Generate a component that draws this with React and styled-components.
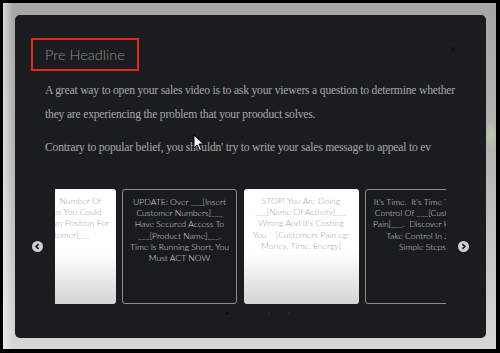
import React from 'react';
import styled, { createGlobalStyle } from 'styled-components';

const Global = createGlobalStyle`
  html, body { margin: 0; padding: 0; background: #000; }
  * { box-sizing: border-box; }
`

const Screen = styled.div`
  width: 500px;
  height: 353px;
  background: #000;
  padding: 3px 4px 4px 3px;
`

const Frame = styled.div`
  height: 100%;
  padding: 12px 10px 11px 12px;
  background:
    radial-gradient(ellipse 6px 14px at 99% 38%, rgba(200, 230, 150, 0.6), rgba(200, 230, 150, 0) 100%),
    linear-gradient(to right, rgba(255,255,255,0.55) 0, rgba(255,255,255,0) 10px),
    linear-gradient(to bottom, #a6a6a6 0%, #b4b4b4 40%, #d6d6d6 100%);
`

const Panel = styled.div`
  position: relative;
  height: 100%;
  background: #1b1c20;
  border-radius: 5px;
  padding: 23px 30px 0 30px;
`

const Close = styled.span`
  position: absolute;
  top: 28px;
  right: 30px;
  font: 11px "Liberation Sans", sans-serif;
  color: #0d0d0f;
`

const HeadlineBox = styled.div`
  display: inline-block;
  margin-left: -14px;
  padding: 0 12px;
  height: 33px;
  line-height: 30px;
  border: 2px solid #e12a1c;
  font-family: Lato, "Open Sans", sans-serif;
  font-weight: 300;
  font-size: 14.5px;
  color: #8c8c8c;
`

const Copy = styled.div`
  margin-top: 8px;
  font-family: "Liberation Serif", serif;
  font-size: 11.6px;
  letter-spacing: -0.19px;
  line-height: 24px;
  color: #a9a9ab;
  white-space: nowrap;
  p { margin: 0 0 9px; }
`

const Carousel = styled.div`
  display: flex;
  align-items: center;
  gap: 12px;
  margin: 29px -13px 0 -13px;
`

const Arrow = styled.div`
  flex: 0 0 11px;
  height: 11px;
  border-radius: 50%;
  background: #cfcfcf;
  display: flex;
  align-items: center;
  justify-content: center;
`

const Viewport = styled.div`
  width: 392px;
  height: 115px;
  overflow: hidden;
`

const Track = styled.div`
  display: flex;
  gap: 6.5px;
  margin-left: -54.5px;
`

const Card = styled.div`
  flex: 0 0 115px;
  height: 115px;
  border-radius: 3px;
  padding: 7px 2px 0;
  text-align: center;
  font-family: Lato, "Open Sans", sans-serif;
  font-weight: 300;
  font-size: 8.6px;
  line-height: 11.2px;
  white-space: pre;
  color: ${p => p.$light ? '#a5a5a5' : '#dedede'};
  background: ${p => p.$light ? 'linear-gradient(to bottom, #ffffff 55%, #d4d4d4 100%)' : '#1a1b1f'};
  border: ${p => p.$light ? 'none' : '1.5px solid #8d8d8f'};
`

const Dots = styled.div`
  display: flex;
  gap: 17.5px;
  margin-top: 8px;
  padding-left: 181px;
`

const Dot = styled.span`
  width: 3px;
  height: 3px;
  border-radius: 50%;
  background: ${p => p.$c};
`

const Pointer = styled.svg`
  position: absolute;
  left: 178px;
  top: 119px;
`

const Chevron = ({ dir }) => (
  <svg width="7" height="7" viewBox="0 0 10 10">
    <path d={dir === 'left' ? 'M6.5 1.5 L3 5 L6.5 8.5' : 'M3.5 1.5 L7 5 L3.5 8.5'} fill="none" stroke="#1b1c20" strokeWidth="2.4" />
  </svg>
)

const cards = [
  { light: true, lines: ['How Many  Number Of', 'Simple Steps You Could', 'Take Your Own Position For', '___[Customer]___'] },
  { light: false, lines: ['UPDATE: Over ___[Insert', 'Customer Numbers]___', 'Have Secured Access To', '___[Product Name]___.', 'Time Is Running Short, You', 'Must ACT NOW'] },
  { light: true, lines: ['STOP! You Are Doing', '___[Name Of Activity]___', "Wrong And It's Costing", 'You    [Customers Pain eg:', 'Money, Time, Energy]'] },
  { light: false, lines: ["It's Time.  It's Time To Take", 'Control Of ___[Customers', 'Pain]___.  Discover How To', 'Take Control In Just', 'Simple Steps'] },
]

export default function App() {
  return (
    <Screen>
      <Global />
      <Frame>
        <Panel>
          <Close>×</Close>
          <HeadlineBox>Pre Headline</HeadlineBox>
          <Copy>
            <p>A great way to open your sales video is to ask your viewers a question to determine whether<br />they are experiencing the problem that your prooduct solves.</p>
            <p>Contrary to popular belief, you shouldn' try to write your sales message to appeal to ev</p>
          </Copy>
          <Carousel>
            <Arrow><Chevron dir="left" /></Arrow>
            <Viewport>
              <Track>
                {cards.map((c, i) => (
                  <Card key={i} $light={c.light}>
                    {c.lines.map((l, j) => <div key={j}>{l}</div>)}
                  </Card>
                ))}
              </Track>
            </Viewport>
            <Arrow><Chevron dir="right" /></Arrow>
          </Carousel>
          <Dots>
            <Dot $c="#0c0c0e" />
            <Dot $c="#1b1c20" />
            <Dot $c="#2a2b2f" />
            <Dot $c="#2a2b2f" />
          </Dots>
          <Pointer width="12" height="18" viewBox="0 0 12 18">
            <path d="M1 1 L1 14 L4 11 L6.5 16.5 L8.5 15.5 L6 10 L10.5 10 Z" fill="#fff" stroke="#000" strokeWidth="1" />
          </Pointer>
        </Panel>
      </Frame>
    </Screen>
  );
}
